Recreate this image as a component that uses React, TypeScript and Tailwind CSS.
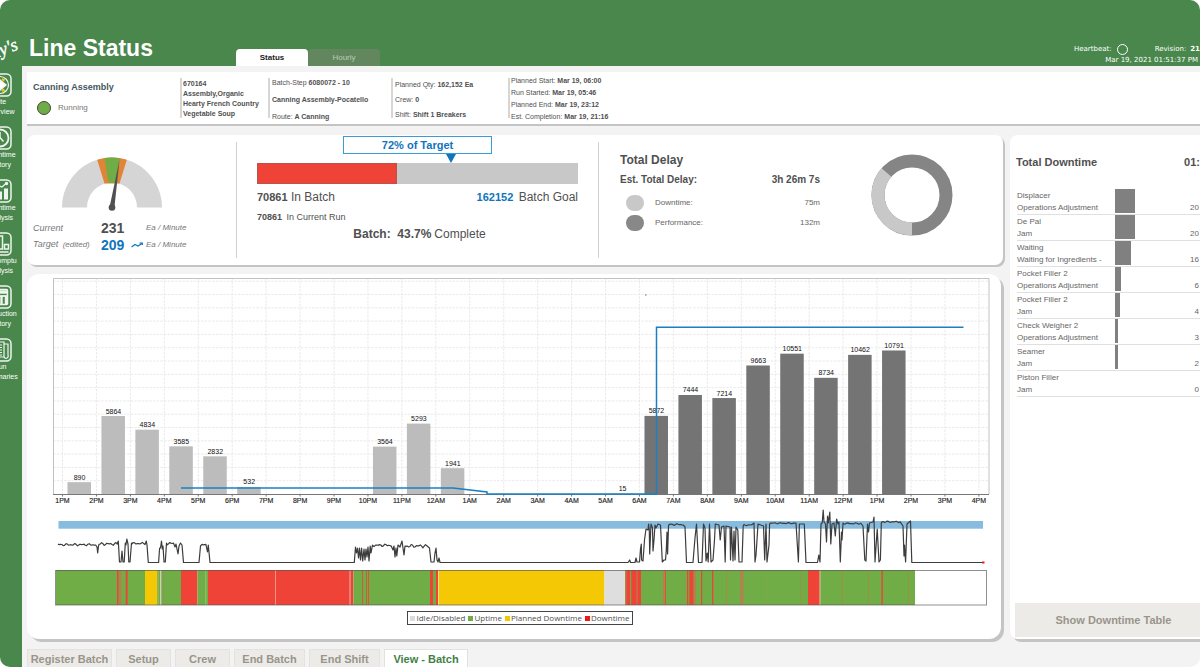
import type { ReactNode } from 'react';
import { clsx } from 'clsx';

const navItems = [
  { lines: ['Site', 'Overview'], icon: 'site' },
  { lines: ['Downtime', 'History'], icon: 'history' },
  { lines: ['Downtime', 'Analysis'], icon: 'analysis' },
  { lines: ['Impromptu', 'Analysis'], icon: 'impromptu' },
  { lines: ['Production', 'History'], icon: 'production' },
  { lines: ['Run', 'Summaries'], icon: 'summaries' },
];

const downtimes = [
  { machine: 'Displacer', reason: 'Operations Adjustment', value: 20, width: 20 },
  { machine: 'De Pal', reason: 'Jam', value: 20, width: 20 },
  { machine: 'Waiting', reason: 'Waiting for Ingredients -', value: 16, width: 16 },
  { machine: 'Pocket Filler 2', reason: 'Operations Adjustment', value: 6, width: 6 },
  { machine: 'Pocket Filler 2', reason: 'Jam', value: 4, width: 5 },
  { machine: 'Check Weigher 2', reason: 'Operations Adjustment', value: 3, width: 3 },
  { machine: 'Seamer', reason: 'Jam', value: 2, width: 3 },
  { machine: 'Piston Filler', reason: 'Jam', value: 0, width: 0 },
];

const batchTabs = [
  { label: 'Register Batch', width: 'w-[85px]' },
  { label: 'Setup', width: 'w-[55px]' },
  { label: 'Crew', width: 'w-[55px]' },
  { label: 'End Batch', width: 'w-[71px]' },
  { label: 'End Shift', width: 'w-[71px]' },
  { label: 'View - Batch', width: 'w-[84px]', active: true },
];

const legend = [
  { label: 'Idle/Disabled', color: 'bg-[#dcdcdc]' },
  { label: 'Uptime', color: 'bg-[#6fac46]' },
  { label: 'Planned Downtime', color: 'bg-[#f5c800]' },
  { label: 'Downtime', color: 'bg-[#f01818]' },
];

// hour index (from 1PM) -> units produced
const production: { hour: number; count: number; current?: boolean }[] = [
  { hour: 0, count: 890 },
  { hour: 1, count: 5864 },
  { hour: 2, count: 4834 },
  { hour: 3, count: 3585 },
  { hour: 4, count: 2832 },
  { hour: 5, count: 532 },
  { hour: 9, count: 3564 },
  { hour: 10, count: 5293 },
  { hour: 11, count: 1941 },
  { hour: 16, count: 15, current: true },
  { hour: 17, count: 5872, current: true },
  { hour: 18, count: 7444, current: true },
  { hour: 19, count: 7214, current: true },
  { hour: 20, count: 9663, current: true },
  { hour: 21, count: 10551, current: true },
  { hour: 22, count: 8734, current: true },
  { hour: 23, count: 10462, current: true },
  { hour: 24, count: 10791, current: true },
];

const HOUR_W = 33.94;
const BASE_Y = 494;
const hourX = (h: number) => 62.5 + h * HOUR_W;
const hourLabel = (h: number) => {
  const hour = (13 + h) % 24;
  return `${hour % 12 === 0 ? 12 : hour % 12}${hour < 12 ? 'AM' : 'PM'}`;
};

type Point = [number, number];

// nearly level stretch of the speed trace
const ripple = (from: number, to: number, y: number, amp: number): Point[] => {
  const points: Point[] = [];
  for (let x = from; x <= to; x += 1.3) {
    points.push([x, y + amp * Math.sin(x * 2.7) * Math.cos(x * 1.3)]);
  }
  return points;
};

const speed: Point[] = [
  ...ripple(58, 96, 544.7, 1.2), [97, 547], [97.7, 553], [98.5, 546],
  ...ripple(99, 118, 544, 1.5), [118.3, 541], [119.5, 562], [121, 562], [122, 551], [123, 562], [124.2, 562],
  [125.3, 543], [126, 545], [126.8, 539], [128, 544], [128.8, 562], [130, 562], [131.5, 543],
  ...ripple(132, 145.5, 543.5, 1.2), [146.3, 541], [147, 545], [148.3, 562.5], [158.6, 562.5],
  [159.6, 548], [160.5, 548], [161.5, 541], [162.3, 549], [163, 546], [164, 562], [165.3, 562], [166.5, 543],
  ...ripple(167, 174, 543.5, 1.5), [175, 547], [176, 544], [178, 554], [179, 546], [180.5, 543], [182, 545], [183.5, 562.5],
  [199, 562.5], [200.5, 546], ...ripple(202, 207, 544.5, 0.6), [207.5, 552], [208.3, 545], [210, 562.5],
  [354.3, 562.5], [355.5, 547], [356.5, 553], [357.5, 548], [358.5, 558], [359.5, 548], [360.5, 560], [361.6, 548],
  [362.7, 561], [364, 549], [365, 560], [366, 549], [367, 557], [368, 547], [369, 561], [370.2, 546], [371, 553], [372.5, 545],
  ...ripple(373, 392, 545.3, 1.4), [393, 550], [394, 546], [395, 557], [396, 548], [396.8, 556], [398, 545], [400, 547],
  [402, 541], [403, 548], [404, 555], [405, 546], ...ripple(406, 428, 546, 1.8), [429.5, 548], [431, 562], [434, 562],
  [435, 553], [436, 548], [437, 560], [438, 562], [439, 558], [440, 562.5],
  [625, 562.5], [628, 562.5], [629.7, 560], [630.5, 562.5], [635, 562.5], [636, 558], [637, 562], [639.5, 562], [640.5, 549],
  [641.3, 544], [641.6, 560], [643, 561], [644.5, 540], [646, 529], [648, 530], [648.6, 524], [649.3, 530], [649.7, 554],
  [651, 524], [652.5, 528], [653, 551], [654, 540], [655, 525], [656, 528], [658, 524], [660.5, 525], [662.3, 562],
  [664, 560], [665.5, 560], [666.3, 550], [667, 532], [667.6, 554], [668.5, 526], ...ripple(669, 684, 524.5, 0.9),
  [685, 527], [686.5, 562.5], [693, 562.5], [694, 550], [695, 538], [696.5, 524], [698.5, 562.5], [702, 562.5],
  [703.5, 524], [705, 528], [706, 561], [707.2, 553], [708.2, 562], [709.5, 524], [711, 562], [713, 560], [714.5, 540],
  [715.3, 524], [719, 525], [720.2, 540], [721.5, 527], [724, 526], [725.2, 562], [726, 526], [730, 527], [730.5, 560],
  [731.5, 527], [733, 561], [734, 531], [735, 560], [736, 527], [737.8, 530], [739, 562], [742, 562], [743.2, 526],
  ...ripple(744, 753, 525, 0.7), [754, 523], [755, 562], [756, 555], [757, 540], [758, 524], [763.5, 526], [764.7, 560],
  [766, 524], [767, 562], [769, 545], [769.6, 524], ...ripple(770, 797, 523.2, 0.7), [798.4, 562], [799.4, 524],
  [804.3, 524], [806, 562.5], [817.5, 562.5], [818.8, 555], [820, 562], [821, 524], [822.2, 523], [823.2, 510],
  [824, 522], [825.5, 524], [826.5, 542], [827.5, 516], [828.3, 523], [829.8, 512], [830.8, 544], [832, 524], [834, 523],
  [835.3, 536], [836.6, 519], [838, 524], [839, 522], [840.3, 562], [841.5, 532], [842, 540], [843, 523],
  ...ripple(844, 862, 523.5, 0.8), [863, 526], [864.8, 560], [866, 561], [867.5, 524], [868.5, 532], [869.5, 523],
  [873, 522], [874, 517], [875, 562], [877.2, 529], [879, 562], [880.4, 560], [881.3, 523], ...ripple(882, 901, 521.8, 0.8),
  [903, 526], [904, 556], [904.5, 545], [905.6, 562], [907, 524], [910.5, 521], [911.8, 562.5], [983, 562.5],
];

const GREEN = '#70ad47';
const RED = '#ef4338';
const YELLOW = '#f5c806';
const IDLE = '#dedede';
const MIXED = '#b1834c';

// [from, to, colour]; later entries are drawn over earlier ones
const states: [number, number, string][] = [
  [56, 145, GREEN], [117, 118.5, RED], [119, 121.5, MIXED], [125.7, 127.6, RED],
  [145, 157, YELLOW], [157, 181, GREEN], [157.5, 158.5, '#b5b96a'], [160, 161.3, '#c5d6b8'], [163, 163.6, MIXED],
  [181, 197.5, RED], [197.5, 208, GREEN], [205.5, 206.2, '#a9c890'], [208, 353.5, RED],
  [275.3, 275.9, '#f3c9c0'], [349.5, 350.5, '#d9b9a8'], [353.5, 430, GREEN],
  [362.2, 363, RED], [366, 366.8, RED], [368.2, 369, RED], [430, 433, RED], [433, 436, GREEN], [436, 438, RED],
  [438.5, 604.5, YELLOW], [604.5, 625, IDLE], [625, 641, RED], [625, 626.5, MIXED], [630, 631.2, GREEN], [636.5, 637.5, MIXED],
  [641, 808, GREEN], [663, 665.5, MIXED], [665.2, 666, RED], [687, 688.2, RED], [689.3, 693.5, RED], [694, 696, MIXED],
  [701, 702.2, RED], [712, 713.3, RED], [726.2, 727, MIXED], [740, 743.3, MIXED], [766, 766.5, '#8fa548'], [800, 800.6, MIXED],
  [808, 819.5, RED], [819.5, 820.5, MIXED], [820.5, 915, GREEN], [841.8, 842.6, MIXED], [868, 868.7, MIXED],
  [881.4, 882.8, RED], [908.3, 909, MIXED],
];

function NavIcon({ name }: { name: string }) {
  return (
    <svg viewBox="0 0 24 24" className="size-6 shrink-0" fill="none" stroke="#eef5ee" strokeWidth="1.5">
      <rect x="1" y="1" width="22" height="22" rx="4.500" />
      {name === 'site' && (
        <>
          <circle cx="12" cy="12" r="8.500" strokeWidth="1.200" />
          <path d="M12 7l6 5-6 5-6-5z" fill="#fff" />
          <path d="M14 6l2.500 1.500M14 18l2.500-1.500M10 6L7.500 7.500M10 18l-2.500-1.500" stroke="#f5c806" strokeWidth="2.500" />
        </>
      )}
      {name === 'history' && (
        <>
          <circle cx="12" cy="12" r="8.500" strokeWidth="1.800" />
          <path d="M12 6v5.500l3.500 4" />
        </>
      )}
      {name === 'analysis' && (
        <>
          <path d="M6 20.500v-6M12 20.500v-8M18 20.500V9.500" strokeWidth="4" />
          <path d="M4 9.500l6-3 4 1.500 4.500-4" strokeWidth="1.200" />
          <circle cx="18.500" cy="4.500" r="1" fill="#fff" />
        </>
      )}
      {name === 'impromptu' && (
        <>
          <path d="M3.500 20h17" />
          <rect x="10" y="4" width="4.500" height="13" />
          <rect x="16.500" y="12.500" width="4" height="4.500" />
          <rect x="4" y="9" width="4" height="8" />
        </>
      )}
      {name === 'production' && (
        <>
          <rect x="4.500" y="4.500" width="15" height="15" rx="1" />
          <path d="M5 7h14" strokeWidth="3.500" />
          <path d="M5 11h14" strokeWidth="1.800" />
          <path d="M9.500 11v9M13.500 11v9M18 11v9" strokeWidth="2.400" />
        </>
      )}
      {name === 'summaries' && (
        <>
          <path d="M6 4h10v15H8a2 2 0 0 1-2-2z" strokeWidth="1.200" />
          <path d="M16 6h4v11a2 2 0 0 1-4 2" strokeWidth="1.200" />
          <path d="M8 7h6M8 9.500h6M8 12h6M8 14.500h6M8 17h6" strokeWidth="1.200" />
        </>
      )}
    </svg>
  );
}

function Sidebar() {
  return (
    <nav className="w-[22px] shrink-0 overflow-hidden bg-[#49874d]">
      <svg viewBox="0 0 22 38" className="mt-[30px] mb-[5px] h-[38px] w-[22px]">
        <text
          x="19"
          y="19"
          textAnchor="end"
          transform="rotate(-22 19 19)"
          fill="#fff"
          stroke="#fff"
          strokeWidth="0.400"
          className="font-['Liberation_Serif',serif] text-[18px] italic"
        >
          Amy's
        </text>
      </svg>
      <div className="-ml-[30px] flex w-[60px] flex-col gap-[9px]">
        {navItems.map((item) => (
          <a key={item.lines.join(' ')} href="#" className="flex flex-col items-center text-[7px] leading-[10px] text-white">
            <NavIcon name={item.icon} />
            <span className="text-center">
              {item.lines[0]}
              <br />
              {item.lines[1]}
            </span>
          </a>
        ))}
      </div>
    </nav>
  );
}

function Header() {
  return (
    <header className="flex h-[66px] items-end bg-[#49874d] pl-[7px]">
      <h1 className="w-[207px] pb-1 text-[23px] leading-7 font-bold text-white">Line Status</h1>
      <div className="flex">
        <button className="h-[17px] w-[72px] rounded-t bg-white text-[8px] font-bold text-[#222]">Status</button>
        <button className="h-[17px] w-[72px] rounded-t bg-[#62875f] text-[8px] text-[#b9cbb7]">Hourly</button>
      </div>
      <div className="ml-auto font-['DejaVu_Sans',sans-serif] text-[7px] leading-[11px] text-white">
        <div className="flex items-center justify-end">
          <span>Heartbeat:</span>
          <span className="mr-[27px] ml-[5px] size-[11px] rounded-full border border-white" />
          <span>Revision:</span>
          <b className="ml-1">21</b>
        </div>
        <div className="pr-[2px] text-right">Mar 19, 2021 01:51:37 PM</div>
      </div>
    </header>
  );
}

function InfoColumn({ children, className }: { children: ReactNode; className: string }) {
  return (
    <div className="flex border-l-2 border-[#d6d6d6] text-[7px] leading-[10px]">
      <div className={clsx('flex flex-col justify-between', className)}>{children}</div>
    </div>
  );
}

function InfoCard() {
  return (
    <section className="grid grid-cols-[153px_88px_123px_117px_1fr] bg-white py-[6px] shadow-[0_2px_0_#c4c4c4]">
      <div className="pt-1 pl-[6px]">
        <h2 className="text-[9px] leading-[11px] font-bold text-[#455560]">Canning Assembly</h2>
        <div className="mt-2 flex items-center gap-[7px] pl-1 text-[8px] text-[#777]">
          <span className="size-[14px] rounded-full border border-[#444] bg-[#6fac46]" />
          Running
        </div>
      </div>
      <InfoColumn className="-mb-[1px] pt-[1px] pl-[1px] font-bold">
        <span>670164</span>
        <span>Assembly,Organic</span>
        <span>Hearty French Country</span>
        <span>Vegetable Soup</span>
      </InfoColumn>
      <InfoColumn className="-mb-1 pl-[2px]">
        <span>Batch-Step <b>6080072 - 10</b></span>
        <b>Canning Assembly-Pocatello</b>
        <span>Route: <b>A Canning</b></span>
      </InfoColumn>
      <InfoColumn className="-mb-[2px] pt-[2px] pl-[2px]">
        <span>Planned Qty: <b>162,152 Ea</b></span>
        <span>Crew: <b>0</b></span>
        <span>Shift: <b>Shift 1 Breakers</b></span>
      </InfoColumn>
      <InfoColumn className="-mt-[2px] -mb-1 pl-[1px]">
        <span>Planned Start: <b>Mar 19, 06:00</b></span>
        <span>Run Started: <b>Mar 19, 05:46</b></span>
        <span>Planned End: <b>Mar 19, 23:12</b></span>
        <span>Est. Completion: <b>Mar 19, 21:16</b></span>
      </InfoColumn>
    </section>
  );
}

function Gauge() {
  return (
    <svg viewBox="0 0 104 56" className="ml-[27px] h-14 w-[104px]">
      <path d="M2 51.500a50 50 0 0 1 100 0H77a25 25 0 0 0-50 0z" fill="#d5d5d5" />
      <path d="M37.200 3.700L44.500 27.600 59.500 27.600 66.800 3.700A50 50 0 0 0 37.200 3.700z" fill="#e08436" />
      <path d="M44.700 2L48.300 26.800Q52 26 55.700 26.800L59.800 2.200A50 50 0 0 0 44.700 2z" fill="#70ad47" />
      <path d="M59.500 4L49.600 51 54.400 51.500z" fill="#505050" />
      <circle cx="52" cy="51.500" r="3.300" fill="#505050" />
    </svg>
  );
}

function SpeedPanel() {
  return (
    <div className="pt-[21px] pl-[6px] text-[#777]">
      <Gauge />
      <div className="mt-2 grid grid-cols-[64px_44px_1fr] items-center text-[8px] leading-4 italic">
        <span className="text-[9px]">Current</span>
        <b className="pl-1 text-[14px] text-[#505050] not-italic">231</b>
        <span className="pl-[5px]">Ea / Minute</span>
        <span className="whitespace-nowrap"><span className="text-[9px]">Target</span>&nbsp; (edited)</span>
        <b className="pl-1 text-[14px] text-[#0f75bc] not-italic">209</b>
        <span className="relative pl-[5px]">
          <svg viewBox="0 0 12 6" className="absolute top-[5px] -left-[10px] h-[6px] w-3" fill="none" stroke="#0f75bc" strokeWidth="1.200">
            <path d="M0.500 5l3.500-2.500 3 1.500L11 1.500M8.500 1h2.800v2" />
          </svg>
          Ea / Minute
        </span>
      </div>
    </div>
  );
}

function BatchPanel() {
  return (
    <div className="px-[21px] pt-[1px] text-[12px] text-[#505050]">
      <div className="mx-auto w-[149px] border border-[#3a9bd9] text-center text-[11px] leading-4 font-bold text-[#0f75bc]">
        72% of Target
      </div>
      <svg viewBox="0 0 10 9" className="ml-[189px] h-[9px] w-[10px]">
        <path d="M0 0h10L5 9z" fill="#0f75bc" />
      </svg>
      <div className="h-[21px] bg-[#c8c8c8]">
        <div className="h-full w-[43.7%] border border-[#b5554d] bg-[#ef4338]" />
      </div>
      <div className="mt-[5px] flex justify-between leading-4">
        <span><b className="text-[11px]">70861</b> In Batch</span>
        <span><b className="mr-[2px] text-[11px] text-[#0f75bc]">162152</b> Batch Goal</span>
      </div>
      <div className="mt-1 text-[9px] leading-4"><b className="mr-[2px]">70861</b> In Current Run</div>
      <div className="pl-[4px] text-center leading-[18px]"><b className="mr-[3px]">Batch: &nbsp;43.7%</b>Complete</div>
    </div>
  );
}

function DelayPanel() {
  return (
    <div className="flex items-start pt-[18px] pl-[21px] text-[#505050]">
      <div className="w-[200px]">
        <h3 className="text-[12px] leading-[14px] font-bold">Total Delay</h3>
        <div className="mt-[6px] flex justify-between text-[10px] leading-[14px] font-bold">
          <span>Est. Total Delay:</span>
          <span>3h 26m 7s</span>
        </div>
        <div className="mt-2 flex items-center pl-[6px] text-[8px] leading-4 text-[#666]">
          <span className="mr-[11px] h-4 w-[18px] rounded-full bg-[#c8c8c8]" />
          Downtime:
          <span className="ml-auto">75m</span>
        </div>
        <div className="mt-1 flex items-center pl-[6px] text-[8px] leading-4 text-[#666]">
          <span className="mr-[11px] h-4 w-[18px] rounded-full bg-[#888]" />
          Performance:
          <span className="ml-auto">132m</span>
        </div>
      </div>
      <svg viewBox="0 0 84 84" className="ml-[50px] size-[84px] shrink-0" fill="none" strokeWidth="13">
        <circle cx="42" cy="42" r="34" stroke="#858585" />
        <path d="M42 76A34 34 0 0 1 16.500 19.500" stroke="#c8c8c8" />
      </svg>
    </div>
  );
}

function ProductionChart() {
  const hours = Array.from({ length: 28 }, (_, i) => i);
  return (
    <svg viewBox="27 274 974 334" className="w-full">
      {/* Grid */}
      <g stroke="#e4e4e4" strokeWidth="0.800" strokeDasharray="2.500 1.200">
        {hours.map((h) => <path key={h} d={`M${hourX(h)} 278V${BASE_Y}`} />)}
        {Array.from({ length: 16 }, (_, i) => <path key={i} d={`M53 ${BASE_Y - 13.3 * (i + 1)}H989`} />)}
      </g>
      <path d={`M53.500 ${BASE_Y}V278.500H989V${BASE_Y}`} fill="none" stroke="#c2c2c2" />

      {/* Bars */}
      {production.map((p) => {
        const height = p.count * 0.0133;
        return (
          <rect
            key={p.hour}
            x={hourX(p.hour) + 5}
            y={BASE_Y - height}
            width="23.500"
            height={height}
            fill={p.current ? '#747474' : '#bcbcbc'}
          />
        );
      })}
      <path d={`M53 ${BASE_Y + 0.5}H989`} stroke="#777" />
      {hours.map((h) => (
        <g key={h}>
          <path d={`M${hourX(h)} ${BASE_Y}v2.500`} stroke="#777" />
          <text x={hourX(h)} y="503" textAnchor="middle" className="text-[7px]" fill="#222" stroke="#222" strokeWidth="0.150">
            {hourLabel(h)}
          </text>
        </g>
      ))}
      {production.map((p) => (
        <text
          key={p.hour}
          x={hourX(p.hour) + 17}
          y={BASE_Y - 2.5 - p.count * 0.0133}
          textAnchor="middle"
          className="text-[7px]"
          fill="#111"
        >
          {p.count}
        </text>
      ))}
      <path d="M181 488H453L487 492V494H656.500V327.300H963.500" fill="none" stroke="#1b7fc4" strokeWidth="1.500" />
      <rect x="645" y="294.500" width="1.500" height="1" fill="#8a6a60" />

      {/* Speed trace */}
      <rect x="58.500" y="521" width="924.500" height="7.700" fill="#87bcde" />
      <path
        d={`M${speed.map(([x, y]) => `${x} ${y.toFixed(1)}`).join('L')}`}
        fill="none"
        stroke="#3d3d3d"
        strokeWidth="1.200"
        strokeLinejoin="round"
      />
      <rect x="982" y="561.500" width="2.500" height="2" fill="#f01818" />

      {/* State timeline */}
      {states.map(([from, to, color]) => (
        <rect key={`${from}-${to}`} x={from} y="570" width={to - from} height="35" fill={color} />
      ))}
      <rect x="55.500" y="570.500" width="931" height="34.500" fill="none" stroke="#555" strokeOpacity="0.650" />
    </svg>
  );
}

function DowntimePanel() {
  return (
    <aside className="flex w-[190px] shrink-0 flex-col rounded-l-lg bg-white pt-[19px] shadow-[3px_3px_0_#c4c4c4]">
      <div className="flex justify-between pl-[6px] text-[11px] leading-4 font-bold text-[#505050]">
        <h3>Total Downtime</h3>
        <span>01:</span>
      </div>
      <table className="mt-[18px] ml-[7px] text-[8px] leading-3 text-[#666]">
        <tbody>
          {downtimes.map((d) => (
            <tr key={`${d.machine} ${d.reason}`} className="h-[26px] border-b border-[#e0e0e0]">
              <td className="w-[98px] p-0 align-bottom whitespace-nowrap">
                {d.machine}
                <br />
                {d.reason}
              </td>
              <td className="p-0">
                <div className="h-6 bg-[#808080]" style={{ width: d.width }} />
              </td>
              <td className="pr-[1px] text-right align-bottom">{d.value}</td>
            </tr>
          ))}
        </tbody>
      </table>
      <button className="mt-auto mb-[2px] ml-[5px] h-[34px] bg-[#ecebe7] pl-[12px] text-[11px] font-bold text-[#99958b]">
        Show Downtime Table
      </button>
    </aside>
  );
}

export default function App() {
  return (
    <div className="flex min-h-screen overflow-hidden rounded-[10px] bg-[#f3f3f3] font-['Liberation_Sans',sans-serif] text-[#505050]">
      <Sidebar />
      <div className="flex min-w-0 flex-1 flex-col">
        <Header />
        <main className="flex flex-1 flex-col pt-[6px] pl-[5px]">
          <InfoCard />
          <div className="mt-[11px] flex flex-1 gap-[7px]">
            <div className="flex min-w-0 flex-1 flex-col gap-[9px]">
              <section className="grid h-[130px] grid-cols-[209fr_363fr_404fr] rounded-lg bg-white shadow-[2px_2px_0_#c4c4c4]">
                <SpeedPanel />
                <div className="relative before:absolute before:top-[7px] before:bottom-[7px] before:left-0 before:w-px before:bg-[#d0d0d0] after:absolute after:top-[7px] after:right-0 after:bottom-[7px] after:w-px after:bg-[#d0d0d0]">
                  <BatchPanel />
                </div>
                <DelayPanel />
              </section>
              <section className="mr-[2px] flex flex-1 flex-col items-center rounded-xl bg-white shadow-[3px_3px_0_#c4c4c4]">
                <ProductionChart />
                <ul className="mt-[3px] ml-3 flex items-center gap-[3px] border border-[#444] px-[2px] font-['Open_Sans',sans-serif] text-[8px] leading-3">
                  {legend.map((item) => (
                    <li key={item.label} className="flex items-center gap-[1px]">
                      <span className={clsx('size-[5px]', item.color)} />
                      {item.label}
                    </li>
                  ))}
                </ul>
              </section>
            </div>
            <DowntimePanel />
          </div>
          <div className="mt-[10px] flex gap-1">
            {batchTabs.map((tab) => (
              <button
                key={tab.label}
                className={clsx(
                  'h-[18px] border border-b-0 border-[#e2e2e0] text-[11px] leading-4 font-bold',
                  tab.width,
                  tab.active ? 'bg-white text-[#3f8145]' : 'bg-[#ecebe7] text-[#99958b]',
                )}
              >
                {tab.label}
              </button>
            ))}
          </div>
        </main>
      </div>
    </div>
  );
}
